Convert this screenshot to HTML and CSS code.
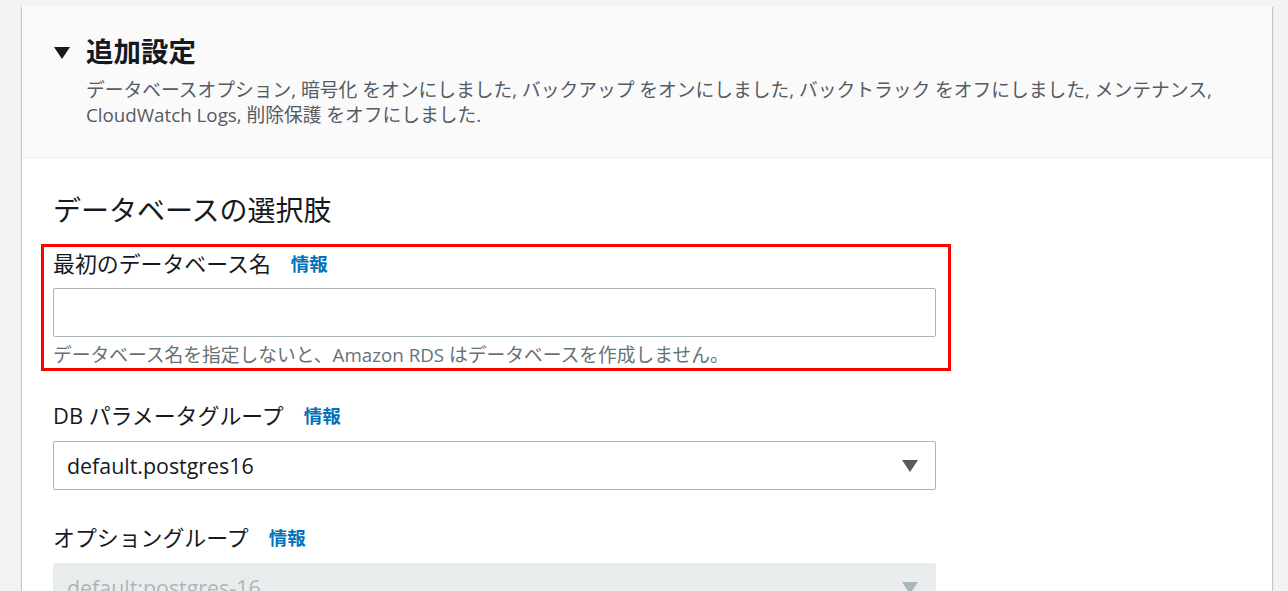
FILE: index.html
```html
<!DOCTYPE html>
<html lang="ja">
<head>
<meta charset="utf-8">
<title>追加設定</title>
<link rel="stylesheet" href="styles.css">
</head>
<body>
<div class="page">
  <section class="card">
    <header class="card-header">
      <div class="title-row">
        <svg class="caret" width="16" height="12" viewBox="0 0 16 12"><polygon points="0,0 16,0 8,12" fill="#16191f"/></svg>
        <h2 class="title">追加設定</h2>
      </div>
      <p class="desc">データベースオプション, 暗号化 をオンにしました, バックアップ をオンにしました, バックトラック をオフにしました, メンテナンス, CloudWatch Logs, 削除保護 をオフにしました.</p>
    </header>
    <div class="card-body">
      <h3 class="section-title">データベースの選択肢</h3>

      <div class="field annotated">
        <div class="label-row"><span class="label">最初のデータベース名</span><a class="info">情報</a></div>
        <div class="input"></div>
        <div class="hint">データベース名を指定しないと、Amazon RDS はデータベースを作成しません。</div>
      </div>

      <div class="field">
        <div class="label-row"><span class="label">DB パラメータグループ</span><a class="info">情報</a></div>
        <div class="select">
          <span class="select-value">default.postgres16</span>
          <svg class="select-caret" width="16" height="12" viewBox="0 0 16 12"><polygon points="0,0 16,0 8,12" fill="#545b64"/></svg>
        </div>
      </div>

      <div class="field">
        <div class="label-row"><span class="label">オプショングループ</span><a class="info">情報</a></div>
        <div class="select disabled">
          <span class="select-value">default:postgres-16</span>
          <svg class="select-caret" width="16" height="12" viewBox="0 0 16 12"><polygon points="0,0 16,0 8,12" fill="#aab7b8"/></svg>
        </div>
      </div>
    </div>
  </section>
</div>
</body>
</html>
```

FILE: styles.css
```css
html, body {
  margin: 0;
  padding: 0;
  background: #f2f3f3;
  font-family: "Open Sans", "Noto Sans CJK JP", sans-serif;
  color: #16191f;
  overflow: hidden;
}

.page {
  padding: 6px 16px 0 22px;
  height: 585px;
}

.card {
  width: 1250px;
  background: #ffffff;
  box-shadow: 0 1px 1px 0 rgba(0, 28, 36, 0.3), 1px 1px 1px 0 rgba(0, 28, 36, 0.15), -1px 1px 1px 0 rgba(0, 28, 36, 0.15);
  height: 600px;
}

.card-header {
  background: #fafafa;
  border-bottom: 1px solid #eaeded;
  height: 151px;
  box-sizing: content-box;
  padding: 0 40px 0 32px;
}

.title-row {
  display: flex;
  align-items: center;
  padding-top: 27px;
  height: 38px;
}

.caret {
  display: block;
  margin-right: 16px;
  margin-top: 2px;
}

.title {
  margin: 0;
  font-size: 27.5px;
  font-weight: 700;
  line-height: 38px;
}

.desc {
  margin: 6px 0 0 32px;
  font-size: 18.75px;
  line-height: 25px;
  color: #545b64;
}

.card-body {
  padding: 34px 0 0 31px;
  width: 883px;
}

.section-title {
  margin: 0 0 21px;
  font-size: 28px;
  font-weight: 400;
  line-height: 36px;
}

.field {
  position: relative;
  margin-bottom: 33px;
}

.annotated::after {
  content: "";
  position: absolute;
  top: -5px;
  bottom: -3px;
  left: -12px;
  right: -15px;
  border: 3px solid #ff0000;
  pointer-events: none;
}

.label-row {
  display: flex;
  align-items: center;
  height: 30px;
  margin-bottom: 9px;
}

.field + .field .label-row {
  margin-bottom: 10px;
}

.label {
  font-size: 21.9px;
  line-height: 30px;
  color: #16191f;
}

.info {
  margin-left: 20px;
  font-size: 18.5px;
  font-weight: 700;
  color: #0073bb;
  line-height: 30px;
}

.input {
  height: 47px;
  border: 1px solid #aab7b8;
  border-radius: 2px;
  background: #fff;
}

.hint {
  margin-top: 4px;
  font-size: 18.75px;
  line-height: 27px;
  color: #687078;
}

.select {
  height: 47px;
  border: 1px solid #aab7b8;
  border-radius: 2px;
  background: #fff;
  display: flex;
  align-items: center;
  justify-content: space-between;
  padding: 0 17px 0 13px;
}

.select-value {
  font-size: 21.4px;
  line-height: 28px;
  color: #16191f;
}

.select-caret {
  display: block;
  margin-top: 1px;
}

.field + .field + .field {
  margin-top: 1px;
}

.select.disabled {
  background: #eaeded;
  border-color: #eaeded;
}

.select.disabled .select-value {
  color: #aab7b8;
}
```
